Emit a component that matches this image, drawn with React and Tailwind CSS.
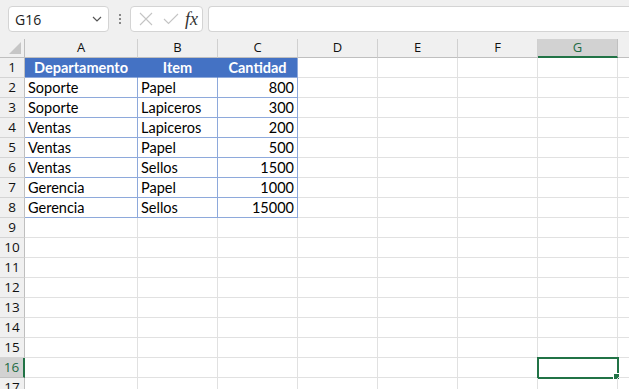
import React from "react";

const cols = ["A", "B", "C", "D", "E", "F", "G", "H"];

const data = [
  ["Departamento", "Item", "Cantidad"],
  ["Soporte", "Papel", "800"],
  ["Soporte", "Lapiceros", "300"],
  ["Ventas", "Lapiceros", "200"],
  ["Ventas", "Papel", "500"],
  ["Ventas", "Sellos", "1500"],
  ["Gerencia", "Papel", "1000"],
  ["Gerencia", "Sellos", "15000"],
];

const cellFont = { fontFamily: "Lato, 'Open Sans', sans-serif" };
const uiFont = { fontFamily: "'Open Sans', 'Noto Sans', sans-serif" };

function Toolbar() {
  return (
    <div className="h-[39px] flex items-start pt-[6px] pl-[8px] bg-[#f0f0f0]">
      {/* Name box */}
      <div
        className="w-[101px] h-[26px] bg-white border border-[#d4d4d4] rounded-[4px] flex items-center justify-between pl-[6px] pr-[6px] text-[14px] text-[#222]"
        style={uiFont}
      >
        <span>G16</span>
        <svg width="10" height="6" viewBox="0 0 10 6" fill="none">
          <path d="M1 1l4 4 4-4" stroke="#555" strokeWidth="1.2" />
        </svg>
      </div>
      {/* dots */}
      <div className="w-[21px] h-[26px] flex flex-col items-center justify-center gap-[2px]">
        <span className="w-[2px] h-[2px] bg-[#888]" />
        <span className="w-[2px] h-[2px] bg-[#888]" />
        <span className="w-[2px] h-[2px] bg-[#888]" />
      </div>
      {/* formula buttons */}
      <div className="w-[73px] h-[26px] bg-white border border-[#d4d4d4] rounded-[4px] flex items-center pl-[8px] pr-[4px]">
        <svg width="14" height="14" viewBox="0 0 14 14" fill="none">
          <path d="M1 1l12 12M13 1L1 13" stroke="#c4c4c4" strokeWidth="1.1" />
        </svg>
        <svg className="ml-[10px]" width="16" height="12" viewBox="0 0 16 12" fill="none">
          <path d="M1 6l4.5 4.5L15 1" stroke="#c4c4c4" strokeWidth="1.1" />
        </svg>
        <span
          className="ml-auto text-[18px] italic text-[#333] leading-none"
          style={{ fontFamily: "'Liberation Serif', serif" }}
        >
          fx
        </span>
      </div>
      {/* formula input */}
      <div className="ml-[5px] flex-1 h-[26px] bg-white border border-[#d4d4d4] border-r-0 rounded-l-[4px]" />
    </div>
  );
}

function Corner() {
  return (
    <div className="w-[25px] h-[19px] bg-[#f0f0f0] border-r border-b border-[#bfbfbf] relative shrink-0">
      <svg className="absolute right-[3px] bottom-[3px]" width="12" height="12" viewBox="0 0 12 12">
        <path d="M12 0V12H0Z" fill="#c6c6c6" />
      </svg>
    </div>
  );
}

export default function App() {
  const widths = ["w-[113px]", "w-[80px]", "w-[80px]", "w-[80px]", "w-[80px]", "w-[80px]", "w-[80px]", "w-[20px]"];
  const rows = Array.from({ length: 17 }, (_, i) => i + 1);

  return (
    <div className="w-[629px] h-[389px] overflow-hidden bg-white">
      <Toolbar />

      {/* column headers */}
      <div className="flex h-[19px] bg-[#f0f0f0]">
        <Corner />
        {cols.map((c, i) => {
          const sel = c === "G";
          return (
            <div
              key={c}
              className={
                "shrink-0 h-[19px] flex items-center justify-center text-[13px] border-r " +
                widths[i] +
                (sel
                  ? " bg-[#d2d2d2] border-r-[#c0c0c0] border-b-2 border-b-[#217346] text-[#1d6b44]"
                  : " border-r-[#d0d0d0] border-b border-b-[#bfbfbf] text-[#111]")
              }
              style={uiFont}
            >
              {c === "H" ? null : c}
            </div>
          );
        })}
      </div>

      {/* rows */}
      {rows.map((r) => {
        const rowSel = r === 16;
        const rowData = data[r - 1];
        return (
          <div key={r} className="flex h-[20px]">
            <div
              className={
                "w-[25px] shrink-0 h-[20px] flex items-center justify-center text-[13.5px] border-b " +
                (rowSel
                  ? "bg-[#d2d2d2] border-b-[#c0c0c0] border-r-2 border-r-[#217346] text-[#1d6b44]"
                  : "bg-[#f0f0f0] border-b-[#d4d4d4] border-r border-r-[#bfbfbf] text-[#111]")
              }
              style={uiFont}
            >
              {r}
            </div>
            {cols.map((c, i) => {
              const inTable = rowData && i < 3;
              const isHead = r === 1 && i < 3;
              const isNum = i === 2;
              const selCell = rowSel && c === "G";
              let cls = "shrink-0 h-[20px] flex items-center px-[3px] text-[14.5px] border-r border-b relative " + widths[i];
              if (isHead) {
                cls += " bg-[#4472c4] text-white font-bold justify-center border-b-[#8ea9db]";
                cls += i === 2 ? " border-r-[#8ea9db]" : " border-r-[#4472c4]";
              } else if (inTable) {
                cls += " border-r-[#8ea9db] border-b-[#8ea9db] text-black" + (isNum ? " justify-end" : "");
              } else {
                cls += " border-r-[#e1e1e1] border-b-[#e1e1e1]";
              }
              return (
                <div key={c} className={cls} style={cellFont}>
                  {inTable ? rowData[i] : null}
                  {selCell && (
                    <>
                      <div className="absolute -left-[1px] -top-[1px] w-[82px] h-[22px] border-2 border-[#217346]" />
                      <div className="absolute -right-[3px] -bottom-[3px] w-[7px] h-[7px] bg-[#217346] border border-white" />
                    </>
                  )}
                </div>
              );
            })}
          </div>
        );
      })}
    </div>
  );
}
